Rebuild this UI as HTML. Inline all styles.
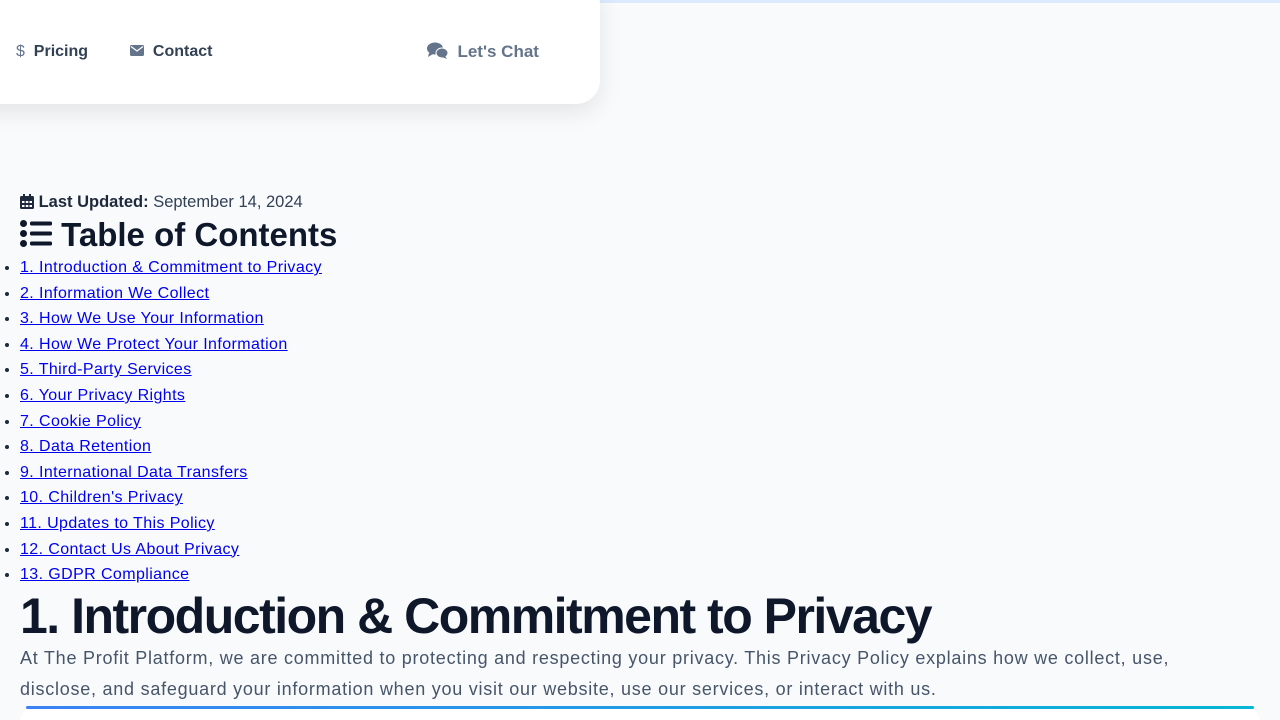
<!DOCTYPE html>
<html><head><meta charset="utf-8"><style>
*{box-sizing:border-box}
html,body{margin:0;width:1280px;height:720px;overflow:hidden}
body{background:#f8fafc;font-family:"Liberation Sans",Arial,sans-serif;color:#1e293b;position:relative}
.strip{position:absolute;top:0;left:0;width:1280px;height:3px;background:#dbeafe}
.nav{position:absolute;left:-40px;top:-20px;width:640px;height:124px;background:#fff;border-radius:24px;box-shadow:0 8px 24px rgba(0,0,0,.09)}
.nav span{position:absolute;top:63px;font-size:16px;font-weight:bold;color:#334155}
.meta{position:absolute;left:20px;top:193px;font-size:16.5px;color:#334155}
h2{position:absolute;left:20px;top:216px;margin:0;font-size:33px;color:#0f172a;font-weight:bold}
ul{position:absolute;left:0;top:255px;margin:0;padding-left:20px;font-size:16px;line-height:25.6px;letter-spacing:.4px}
li{color:#1e293b}
a{color:#0000ee;text-decoration:underline}
h1{position:absolute;left:20px;top:587px;margin:0;font-size:50px;letter-spacing:-1.5px;color:#0f172a;font-weight:bold;line-height:58px}
p{position:absolute;left:20px;top:643px;margin:0;width:1200px;font-size:18px;line-height:31px;color:#475569;letter-spacing:.75px}
.card{position:absolute;left:20px;top:706px;width:1240px;height:40px;background:#fff;border-radius:16px}
.grad{position:absolute;left:26px;top:706px;width:1228px;height:3px;background:linear-gradient(90deg,#3b82f6,#06b6d4);border-radius:3px}
</style></head><body>
<div class="strip"></div>
<div class="nav">
<span style="left:56px"><span style="position:static;color:#64748b;font-weight:normal">$</span>&nbsp; Pricing</span>
<span style="left:170px"><svg width="14" height="11" viewBox="0 0 14 11" style="vertical-align:0"><rect width="14" height="11" rx="1.5" fill="#64748b"/><path d="M1 1.5 7 6 13 1.5" stroke="#fff" stroke-width="1.2" fill="none"/></svg>&nbsp; Contact</span>
<span style="left:467px;color:#64748b;font-size:17px;top:62px"><svg width="21" height="17" viewBox="0 0 21 17" style="vertical-align:-2px"><ellipse cx="8" cy="6.5" rx="8" ry="6" fill="#64748b"/><path d="M2 11 1 15 6 12Z" fill="#64748b"/><ellipse cx="15" cy="11" rx="6" ry="5" fill="#64748b" stroke="#fff" stroke-width="1"/><path d="M18 14 20 17 15 15Z" fill="#64748b"/></svg>&nbsp; Let's Chat</span>
</div>
<div class="meta"><svg width="14" height="15" viewBox="0 0 14 15" style="vertical-align:-2px"><rect y="2" width="14" height="13" rx="1.5" fill="#1e293b"/><rect x="3" y="0" width="2" height="4" fill="#1e293b"/><rect x="9" y="0" width="2" height="4" fill="#1e293b"/><g fill="#fff"><rect x="2" y="7" width="2.5" height="2"/><rect x="5.8" y="7" width="2.5" height="2"/><rect x="9.5" y="7" width="2.5" height="2"/><rect x="2" y="11" width="2.5" height="2"/><rect x="5.8" y="11" width="2.5" height="2"/><rect x="9.5" y="11" width="2.5" height="2"/></g></svg> <b style="color:#1e293b">Last Updated:</b> September 14, 2024</div>
<h2><svg width="32" height="27" viewBox="0 0 32 27" style="vertical-align:-1px"><g fill="#0f172a"><circle cx="3.5" cy="3.5" r="3.5"/><circle cx="3.5" cy="13.5" r="3.5"/><circle cx="3.5" cy="23.5" r="3.5"/><rect x="10" y="1.5" width="22" height="4" rx="1.5"/><rect x="10" y="11.5" width="22" height="4" rx="1.5"/><rect x="10" y="21.5" width="22" height="4" rx="1.5"/></g></svg> Table of Contents</h2>
<ul>
<li><a>1. Introduction &amp; Commitment to Privacy</a></li>
<li><a>2. Information We Collect</a></li>
<li><a>3. How We Use Your Information</a></li>
<li><a>4. How We Protect Your Information</a></li>
<li><a>5. Third-Party Services</a></li>
<li><a>6. Your Privacy Rights</a></li>
<li><a>7. Cookie Policy</a></li>
<li><a>8. Data Retention</a></li>
<li><a>9. International Data Transfers</a></li>
<li><a>10. Children's Privacy</a></li>
<li><a>11. Updates to This Policy</a></li>
<li><a>12. Contact Us About Privacy</a></li>
<li><a>13. GDPR Compliance</a></li>
</ul>
<h1>1. Introduction &amp; Commitment to Privacy</h1>
<p>At The Profit Platform, we are committed to protecting and respecting your privacy. This Privacy Policy explains how we collect, use, disclose, and safeguard your information when you visit our website, use our services, or interact with us.</p>
<div class="card"></div>
<div class="grad"></div>
</body></html>
